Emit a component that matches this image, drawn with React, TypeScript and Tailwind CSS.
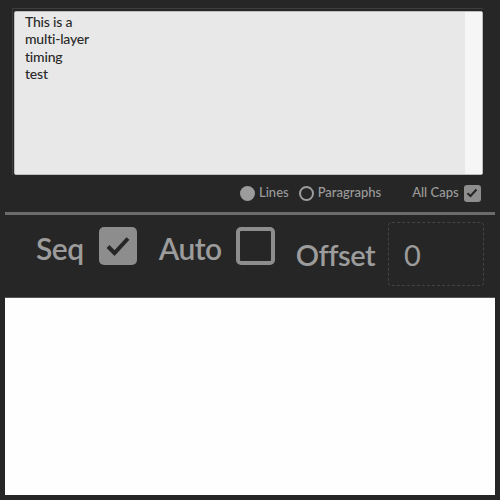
export default function App() {
  return (
    <div className="relative h-[500px] w-[500px] overflow-hidden bg-[#262626] font-['Lato',sans-serif] text-[#9c9c9c]">
      <div className="ml-[12px] mt-[8px] w-[471px] border-l border-t border-[#3c3c3c] pl-[1px] pt-[2px]">
        <div className="flex h-[164px] w-[469px] overflow-hidden rounded-[2px] border border-[#bdbdbd] bg-[#e8e8e8]">
          <div className="flex-1 pl-[10px] pt-[1px] text-[14px] font-medium leading-[17.3px] tracking-[-0.2px] text-[#2a2a2a]">
            <div>This is a</div>
            <div>multi-layer</div>
            <div>timing</div>
            <div>test</div>
          </div>
          <div className="w-[17px] bg-[#f6f6f6]" />
        </div>
      </div>

      <div className="mt-[9px] flex h-[18px] items-center pl-[240px] text-[13px] font-medium">
        <span className="h-[15px] w-[15px] rounded-full bg-[#9c9c9c]" />
        <span className="ml-[4px]">Lines</span>
        <span className="ml-[10px] h-[15px] w-[15px] rounded-full border-2 border-[#9c9c9c]" />
        <span className="ml-[4px]">Paragraphs</span>
        <span className="ml-[31px]">All Caps</span>
        <span className="ml-[5px] flex h-[17px] w-[17px] items-center justify-center rounded-[3px] bg-[#8e8e8e]">
          <svg width="12" height="10" viewBox="0 0 12 10" fill="none">
            <path d="M1.5 5.2 L4.5 8 L10.5 1.5" stroke="#262626" strokeWidth="2" />
          </svg>
        </span>
      </div>

      <div className="ml-[5px] mt-[10px] h-[3px] w-[490px] bg-[#6b6b6b]" />

      <div className="mt-[7px] flex h-[64px] items-center font-semibold">
        <span className="mb-[12px] ml-[36px] text-[30px] leading-none tracking-[-0.5px]">Seq</span>
        <span className="mb-[16px] ml-[15px] flex h-[38px] w-[38px] items-center justify-center rounded-[5px] bg-[#8d8d8d]">
          <svg width="26" height="22" viewBox="0 0 26 22" fill="none">
            <path d="M3 11.5 L9.5 18 L23 3.5" stroke="#262626" strokeWidth="4" />
          </svg>
        </span>
        <span className="mb-[12px] ml-[22px] text-[30px] leading-none tracking-[-0.5px]">Auto</span>
        <span className="mb-[16px] ml-[14px] h-[38px] w-[39px] rounded-[5px] border-[4px] border-[#8d8d8d]" />
        <span className="ml-[21px] text-[29px] leading-none tracking-[-0.5px]">Offset</span>
        <div className="ml-[13px] flex h-[64px] w-[96px] items-center rounded-[4px] border border-dashed border-[#444444] pl-[15px] text-[29px] font-normal leading-none">
          <span>0</span>
        </div>
      </div>

      <div className="ml-[5px] mt-[11px] h-[198px] w-[490px] border-t border-[#555555] bg-[#fefefe]" />
    </div>
  );
}
